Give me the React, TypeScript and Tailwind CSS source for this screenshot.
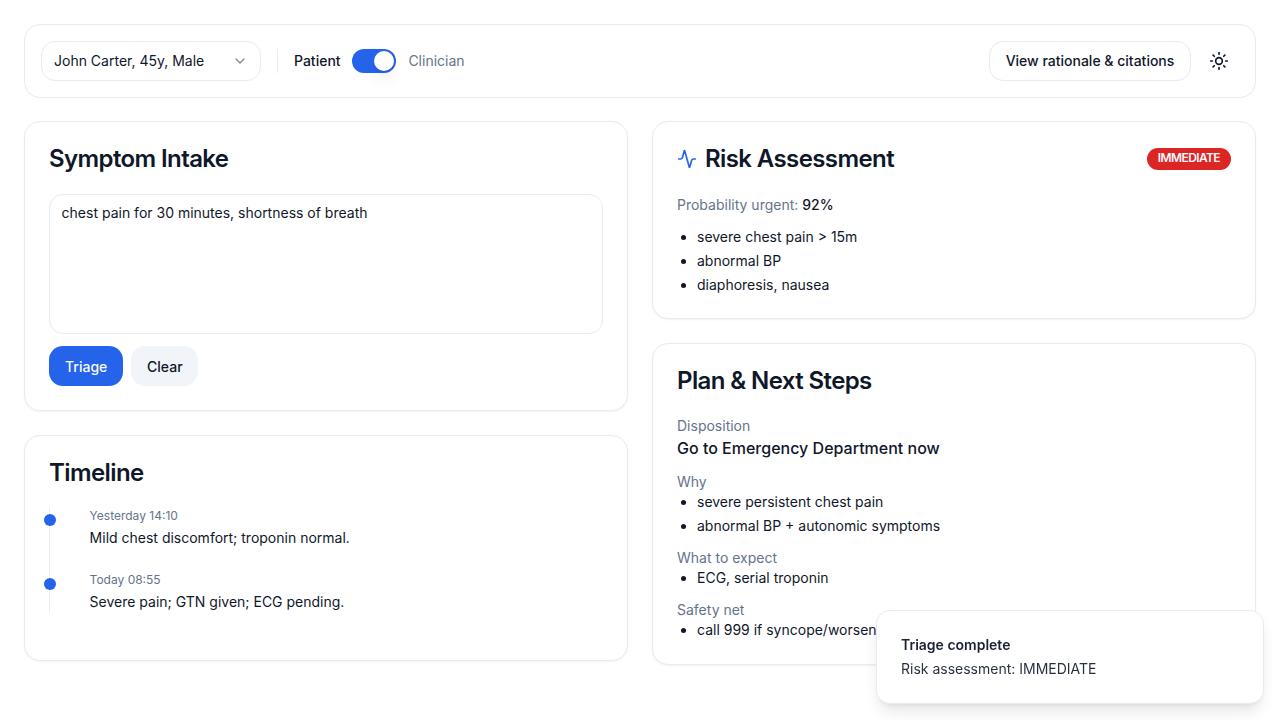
import type { ReactNode } from "react";
import { Activity, ChevronDown, Sun } from "lucide-react";

function Card({ children }: { children: ReactNode }) {
  return (
    <section className="rounded-2xl border border-[#e7ebf3] bg-white p-6 shadow-[0_1px_2px_0_rgba(0,0,0,0.05)]">
      {children}
    </section>
  );
}

function CardTitle({ children }: { children: ReactNode }) {
  return (
    <h2 className="flex h-6 items-center gap-2 pt-0.5 text-2xl leading-none font-semibold tracking-tight">
      {children}
    </h2>
  );
}

function BulletList({ items }: { items: string[] }) {
  return (
    <ul className="list-disc space-y-1 pl-5 text-sm">
      {items.map((item) => (
        <li key={item}>{item}</li>
      ))}
    </ul>
  );
}

function PlanSection({ label, items }: { label: string; items: string[] }) {
  return (
    <div>
      <div className="text-sm text-[#64748b]">{label}</div>
      <BulletList items={items} />
    </div>
  );
}

const events = [
  { time: "Yesterday 14:10", text: "Mild chest discomfort; troponin normal." },
  { time: "Today 08:55", text: "Severe pain; GTN given; ECG pending." },
];

function Header() {
  return (
    <header className="flex h-[74px] items-center justify-between rounded-2xl border border-[#e7ebf3] bg-white px-4">
      <div className="flex items-center gap-4">
        <button className="flex h-10 w-[220px] items-center justify-between rounded-[14px] border border-[#e7ebf3] px-3 text-sm">
          <span>John Carter, 45y, Male</span>
          <ChevronDown className="size-4 opacity-50" />
        </button>
        <div className="h-6 w-px bg-[#e7ebf3]" />
        <div className="flex items-center gap-3 text-sm">
          <span className="w-[46.4px] font-medium whitespace-nowrap">Patient</span>
          <button
            role="switch"
            aria-checked="true"
            aria-label="Clinician view"
            className="flex h-6 w-11 items-center justify-end rounded-full bg-[#2563eb] p-0.5"
          >
            <span className="size-5 rounded-full bg-white shadow-lg" />
          </button>
          <span className="text-[#64748b]">Clinician</span>
        </div>
      </div>
      <div className="flex items-center gap-2">
        <button className="h-10 w-[202px] rounded-[14px] border border-[#e7ebf3] text-sm font-medium whitespace-nowrap">
          View rationale &amp; citations
        </button>
        <button aria-label="Theme" className="flex size-10 items-center justify-center">
          <Sun className="size-5" />
        </button>
      </div>
    </header>
  );
}

export default function App() {
  return (
    <div className="flex h-[720px] flex-col gap-[23.4px] overflow-hidden bg-white p-6 font-['Inter',sans-serif] text-[#0f172a]">
      <Header />

      <main className="grid grid-cols-2 items-start gap-6">
        <div className="flex flex-col gap-6">
          <Card>
            <CardTitle>Symptom Intake</CardTitle>
            <textarea
              className="mt-6 block h-[140px] w-full resize-none rounded-[14px] border border-[#e7ebf3] px-[11.6px] py-2 text-sm"
              defaultValue="chest pain for 30 minutes, shortness of breath"
            />
            <div className="mt-3 flex gap-2 text-sm font-medium">
              <button className="h-10 rounded-[14px] bg-[#2563eb] px-4 pt-0.5 text-slate-50">
                Triage
              </button>
              <button className="h-10 w-[67px] rounded-[14px] bg-[#f1f5f9] pt-0.5 whitespace-nowrap">
                Clear
              </button>
            </div>
          </Card>

          <Card>
            <CardTitle>Timeline</CardTitle>
            <ol className="relative mt-6">
              <span className="absolute top-0 bottom-6 left-0 w-px bg-[#e7ebf3]" />
              {events.map((event) => (
                <li key={event.time} className="relative h-16 pl-[40.6px]">
                  <span className="absolute top-1.5 -left-[5px] size-3 rounded-full bg-[#2563eb]" />
                  <div className="text-xs text-[#64748b]">{event.time}</div>
                  <div className="mt-1 text-sm">{event.text}</div>
                </li>
              ))}
            </ol>
          </Card>
        </div>

        <div className="flex flex-col gap-6">
          <Card>
            <div className="flex h-6 items-center justify-between">
              <CardTitle>
                <Activity className="size-5 text-[#2563eb]" />
                Risk Assessment
              </CardTitle>
              <span className="mt-0.5 rounded-full border border-transparent bg-[#dc2626] px-2.5 pt-px pb-[3px] text-xs font-semibold tracking-[-0.6px] text-slate-50">
                IMMEDIATE
              </span>
            </div>
            <div className="mt-[25px] -mb-px space-y-3">
              <p className="text-sm text-[#64748b]">
                Probability urgent: <span className="font-medium text-[#0f172a]">92%</span>
              </p>
              <BulletList
                items={["severe chest pain > 15m", "abnormal BP", "diaphoresis, nausea"]}
              />
            </div>
          </Card>

          <Card>
            <CardTitle>Plan &amp; Next Steps</CardTitle>
            <div className="mt-6 space-y-3">
              <div>
                <div className="text-sm text-[#64748b]">Disposition</div>
                <div className="font-medium">Go to Emergency Department now</div>
              </div>
              <PlanSection
                label="Why"
                items={["severe persistent chest pain", "abnormal BP + autonomic symptoms"]}
              />
              <PlanSection label="What to expect" items={["ECG, serial troponin"]} />
              <PlanSection label="Safety net" items={["call 999 if syncope/worsening"]} />
            </div>
          </Card>
        </div>
      </main>

      <div
        role="status"
        className="fixed right-4 bottom-4 grid w-[388px] gap-1 rounded-[14px] border border-[#e7ebf3] bg-white p-6 text-sm shadow-lg"
      >
        <div className="font-semibold opacity-95">Triage complete</div>
        <div className="opacity-90">Risk assessment: IMMEDIATE</div>
      </div>
    </div>
  );
}
